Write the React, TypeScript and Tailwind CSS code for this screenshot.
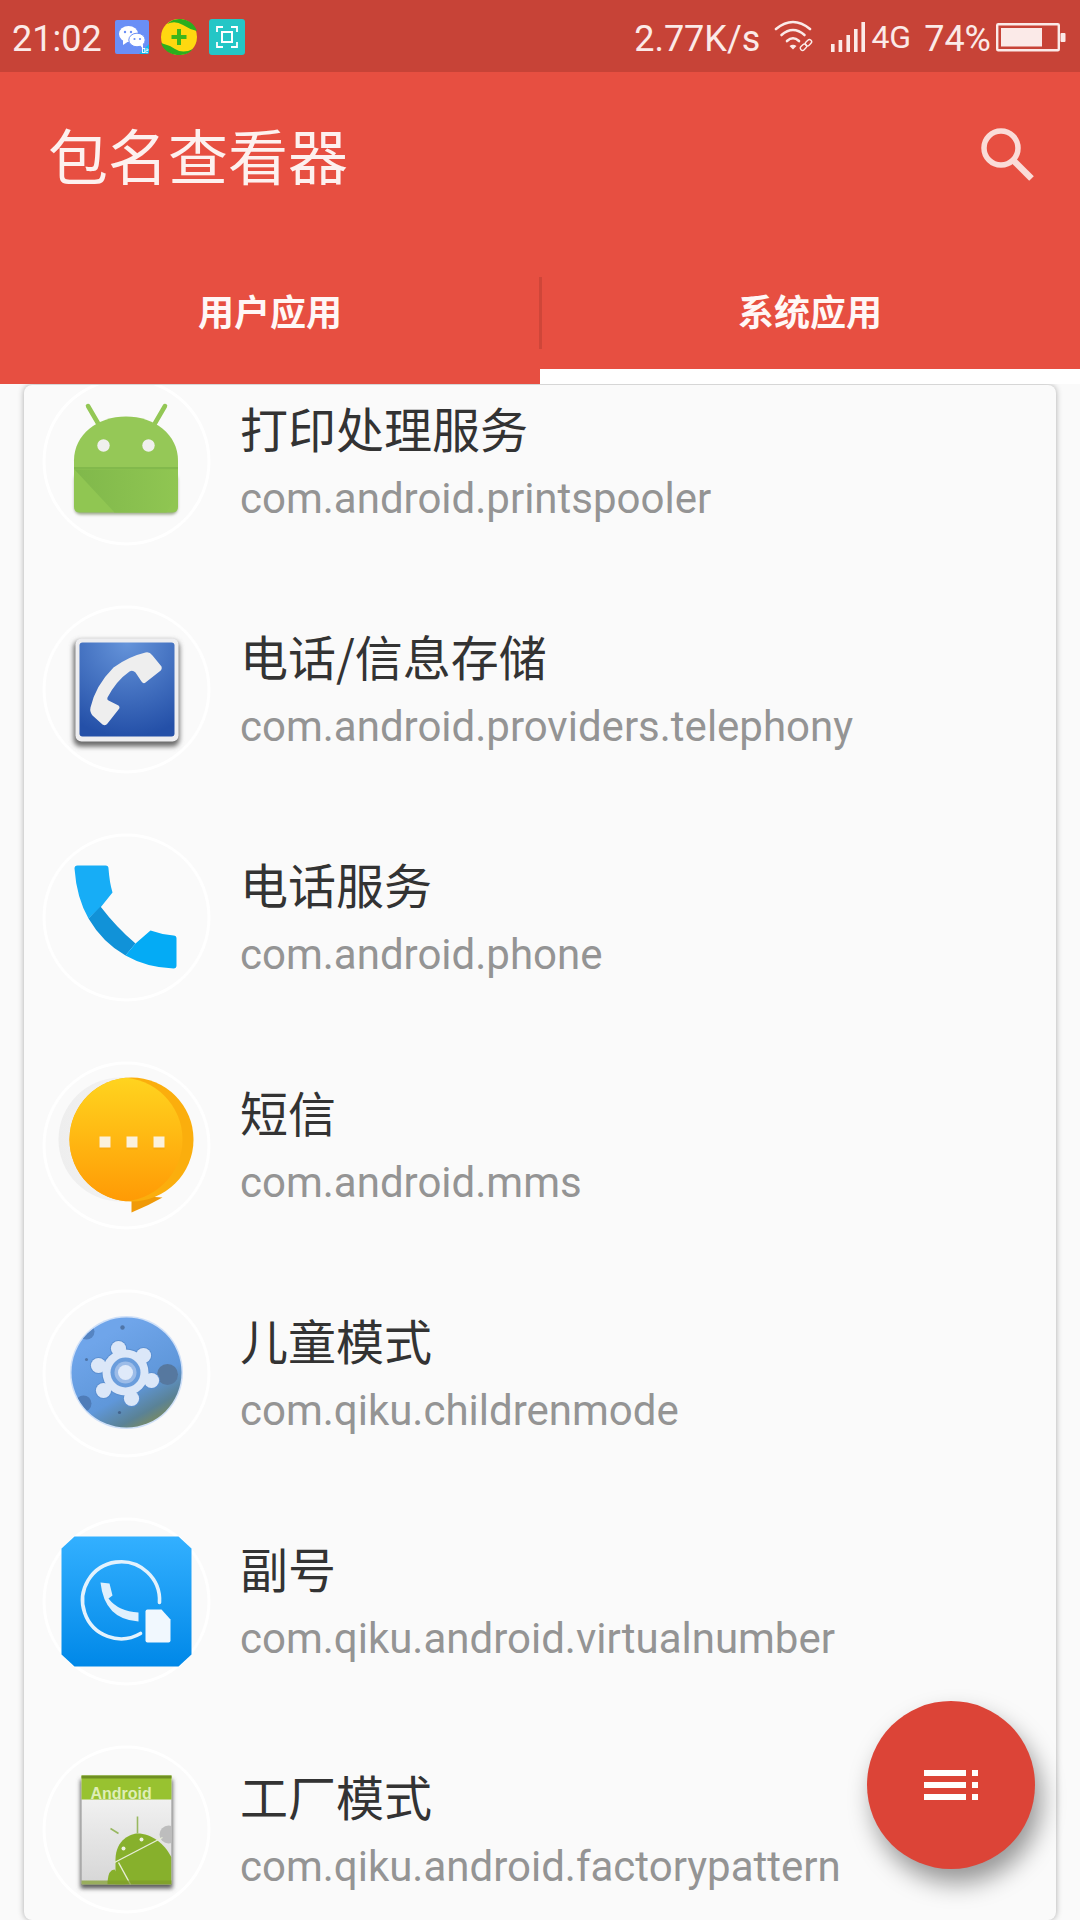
import React from "react";

const CJK = "font-['Noto_Sans_CJK_SC','Noto_Sans',sans-serif]";

function Ring() {
  return <circle cx="0" cy="0" r="82.5" fill="none" stroke="#ffffff" strokeWidth="3" />;
}

function IconFrame({ children }: { children: React.ReactNode }) {
  return (
    <svg width="167" height="167" viewBox="-83.5 -83.5 167 167" className="shrink-0 overflow-visible">
      <Ring />
      {children}
    </svg>
  );
}

function AndroidIcon() {
  return (
    <IconFrame>
      <defs>
        <filter id="aSh" x="-20%" y="-20%" width="140%" height="140%"><feGaussianBlur stdDeviation="1.5" /></filter>
        <linearGradient id="aFold" x1="0" y1="0" x2="1" y2="0">
          <stop offset="0" stopColor="#80b84b" />
          <stop offset="1" stopColor="#90c652" />
        </linearGradient>
      </defs>
      <rect x="-52" y="12" width="103" height="41" rx="6" fill="#9aa58a" filter="url(#aSh)" />
      <path d="M-38.5 -55.5 L-26 -34" stroke="#93c755" strokeWidth="4.5" strokeLinecap="round" />
      <path d="M38.5 -55.5 L26 -34" stroke="#93c755" strokeWidth="4.5" strokeLinecap="round" />
      <path d="M-52.5 6 V-1 C-52.5 -27 -29 -45 -0.5 -45 C28 -45 51.5 -27 51.5 -1 V6 Z" fill="#95c857" />
      <path d="M-52.5 6 H51.5 V45 Q51.5 51 45.5 51 H-46.5 Q-52.5 51 -52.5 45 Z" fill="#90c652" />
      <path d="M-52 8 H44 L51.5 14 V32 L40 51 H-12 Z" fill="url(#aFold)" />
      <rect x="-52.5" y="5.5" width="104" height="2.2" fill="#82b94c" />
      <circle cx="-23" cy="-16" r="6.2" fill="#f0f0ee" />
      <circle cx="22" cy="-16" r="6.2" fill="#f0f0ee" />
    </IconFrame>
  );
}

function TelephonyIcon() {
  return (
    <IconFrame>
      <defs>
        <radialGradient id="tBlue" cx="0.5" cy="0" r="1">
          <stop offset="0" stopColor="#6594da" />
          <stop offset="1" stopColor="#2450a8" />
        </radialGradient>
        <filter id="tSh" x="-20%" y="-20%" width="140%" height="140%"><feGaussianBlur stdDeviation="2.4" /></filter>
      </defs>
      <rect x="-53" y="-49" width="106" height="106" rx="7" fill="#6a6a6a" filter="url(#tSh)" />
      <rect x="-51" y="-51" width="103" height="103" rx="6" fill="#eeeef0" />
      <rect x="-47" y="-47" width="95" height="94" rx="3" fill="url(#tBlue)" />
      <path d="M19 -37 Q23 -38 26 -34 L35 -23 Q36 -20 33 -18 L19 -7 Q17 -5 15 -8 L9 -17 Q6 -20 3 -18 Q-10 -9 -19 8 Q-20 10 -18 11 L-8 16 Q-6 18 -8 20 L-19 34 Q-21 37 -24 35 L-34 26 Q-37 22 -36 18 Q-31 -4 -13 -22 Q2 -33 19 -37 Z" fill="#eeeeee" />
    </IconFrame>
  );
}

function PhoneIcon() {
  return (
    <IconFrame>
      <path d="M-52 -49 Q-52 -52 -49 -52 L-21 -52 Q-18 -52 -18 -49 Q-17 -35 -14 -25 L-26 -10 L-38 1 Q-50 -20 -52 -49 Z" fill="#17adf6" />
      <path d="M-26 -11 Q-10 10 9 26 L-1 38 Q-24 25 -38 1 Z" fill="#1192d8" />
      <path d="M9 26 L24 13 Q35 17 47 18 Q50 18 50 21 V48 Q50 51 47 51 Q20 50 -1 38 Z" fill="#04abf5" />
    </IconFrame>
  );
}

function MmsIcon() {
  return (
    <IconFrame>
      <defs>
        <linearGradient id="mGrad" x1="0" y1="0" x2="0" y2="1">
          <stop offset="0" stopColor="#ffd41f" />
          <stop offset="1" stopColor="#ff9a05" />
        </linearGradient>
        <linearGradient id="mBack" x1="0" y1="0" x2="1" y2="0">
          <stop offset="0" stopColor="#eeeeee" />
          <stop offset="1" stopColor="#f6f6f6" />
        </linearGradient>
        <clipPath id="mClip"><circle cx="5" cy="-6" r="62" /></clipPath>
      </defs>
      <circle cx="-6" cy="-6" r="62" fill="url(#mBack)" />
      <path d="M5 50 V67 Q22 60 36 52 Z" fill="#f09a08" />
      <circle cx="5" cy="-6" r="62" fill="#fbae0d" />
      <circle cx="-6" cy="-6" r="62" fill="url(#mGrad)" clipPath="url(#mClip)" />
      {[-27, 0, 27].map((x) => (
        <g key={x}>
          <rect x={x} y="-7" width="11" height="11" fill="#e88a00" opacity="0.25" />
          <rect x={x} y="-9" width="11" height="11" fill="#fbf1dd" />
        </g>
      ))}
    </IconFrame>
  );
}

function ChildIcon() {
  const teeth = [[-7, -24], [18, -17], [26, 8], [6, 26], [-22, 18], [-27, -7]];
  return (
    <IconFrame>
      <defs>
        <linearGradient id="pGrad" x1="0.25" y1="0.2" x2="0.7" y2="1">
          <stop offset="0" stopColor="#6fa5ea" />
          <stop offset="0.6" stopColor="#5f97da" />
          <stop offset="0.85" stopColor="#5a8296" />
          <stop offset="1" stopColor="#7b8b5f" />
        </linearGradient>
        <clipPath id="pClip"><circle cx="0" cy="-1" r="55" /></clipPath>
      </defs>
      <circle cx="0" cy="-1" r="56.5" fill="#cfe0f8" />
      <circle cx="0" cy="-1" r="55" fill="url(#pGrad)" />
      <g clipPath="url(#pClip)">
        <circle cx="41" cy="1" r="10.5" fill="#56789f" />
        <circle cx="-43" cy="30" r="8" fill="#4f7cb8" />
        <circle cx="-40" cy="-42" r="8" fill="#5584c2" />
        <circle cx="-4" cy="-46" r="2.2" fill="#4f75a8" />
        <circle cx="-40" cy="-14" r="1.5" fill="#4f75a8" />
        <circle cx="-7" cy="39" r="1.6" fill="#44648c" />
      </g>
      <g transform="translate(-1 -1)">
        {teeth.map(([x, y]) => (
          <circle key={`o${x}${y}`} cx={x} cy={y} r="8.6" fill="#5b8fd0" />
        ))}
        <circle cx="0" cy="0" r="24" fill="#5b8fd0" />
        {teeth.map(([x, y]) => (
          <circle key={`f${x}${y}`} cx={x} cy={y} r="7.6" fill="#dbe7f8" />
        ))}
        <circle cx="0" cy="0" r="23" fill="#dbe7f8" />
        <circle cx="0" cy="0" r="15" fill="#6a9ddc" />
        <circle cx="0" cy="0" r="11" fill="#9cbce8" />
        <circle cx="0" cy="0" r="7.5" fill="#dfeafa" />
      </g>
    </IconFrame>
  );
}

function VirtualIcon() {
  return (
    <IconFrame>
      <defs>
        <linearGradient id="vGrad" x1="0" y1="0" x2="0" y2="1">
          <stop offset="0" stopColor="#33b0ff" />
          <stop offset="1" stopColor="#0088e8" />
        </linearGradient>
      </defs>
      <path d="M-52 -65 H52 L65 -53 V53 L52 65 H-52 L-65 53 V-53 Z" fill="url(#vGrad)" />
      <path d="M33 1 A38.5 38.5 0 1 0 14 32" fill="none" stroke="#e3f2fd" strokeWidth="3.6" strokeLinecap="round" />
      <path d="M-26 -19 L-17 -18 L-14 -6 L-18 -3 Q-8 10 12 11 V20 Q-22 18 -26 -19 Z" fill="#dff0fd" />
      <path d="M21 8 H35 L44 18 V39 Q44 41 42 41 H21 Q19 41 19 39 V10 Q19 8 21 8 Z" fill="#f1f8fe" />
    </IconFrame>
  );
}

function FactoryIcon() {
  return (
    <IconFrame>
      <defs>
        <linearGradient id="fGrad" x1="0" y1="0" x2="0" y2="1">
          <stop offset="0" stopColor="#f8f8f8" />
          <stop offset="1" stopColor="#d6d6d6" />
        </linearGradient>
        <filter id="fSh" x="-20%" y="-20%" width="140%" height="140%"><feGaussianBlur stdDeviation="2" /></filter>
        <clipPath id="fClip"><rect x="-45" y="-54" width="90" height="109" /></clipPath>
      </defs>
      <rect x="-46" y="-50" width="92" height="109" fill="#5a5a5a" filter="url(#fSh)" />
      <rect x="-45" y="-54" width="90" height="109" rx="1" fill="url(#fGrad)" />
      <rect x="-45" y="-54" width="90" height="24" fill="#98c230" />
      <rect x="-45" y="-54" width="90" height="3" fill="#6f8f22" />
      <text x="-36" y="-31" fontSize="16" fontWeight="700" fill="#dfeeb8" fontFamily="Liberation Sans, sans-serif">Android</text>
      <g clipPath="url(#fClip)">
        <circle cx="42" cy="5" r="9" fill="#bdbdbd" />
        <path d="M-11 47 V30 C-11 10 5 4 11 4 C25 4 38 14 45 28 V55 H-11 Z" fill="#87b02c" />
        <path d="M-12 33 L36 8" stroke="#e8eed8" strokeWidth="1.4" />
        <path d="M-8 33 L4 55" stroke="#e8eed8" strokeWidth="1.4" />
        <path d="M-16 -1 L-8 4 M11 -13 V4" stroke="#98b860" strokeWidth="1.6" />
        <path d="M-19 52 Q-18 40 -12 40 L-1 55 H-19 Z" fill="#87b02c" />
        <circle cx="-3" cy="19" r="2" fill="#eef2e0" />
        <circle cx="15" cy="10" r="2" fill="#eef2e0" />
      </g>
      <rect x="-45" y="51" width="90" height="4" fill="#7f9d2a" opacity="0.7" />
    </IconFrame>
  );
}

const apps: { name: string; pkg: string; Icon: () => React.ReactElement }[] = [
  { name: "打印处理服务", pkg: "com.android.printspooler", Icon: AndroidIcon },
  { name: "电话/信息存储", pkg: "com.android.providers.telephony", Icon: TelephonyIcon },
  { name: "电话服务", pkg: "com.android.phone", Icon: PhoneIcon },
  { name: "短信", pkg: "com.android.mms", Icon: MmsIcon },
  { name: "儿童模式", pkg: "com.qiku.childrenmode", Icon: ChildIcon },
  { name: "副号", pkg: "com.qiku.android.virtualnumber", Icon: VirtualIcon },
  { name: "工厂模式", pkg: "com.qiku.android.factorypattern", Icon: FactoryIcon },
];

function WechatNote() {
  return (
    <svg width="34" height="34" viewBox="0 0 34 34">
      <rect width="34" height="34" rx="2" fill="#6a8ff6" />
      <ellipse cx="13.5" cy="14" rx="9.5" ry="8" fill="#fff" />
      <path d="M8 19 L8 25 L14 21 Z" fill="#fff" />
      <ellipse cx="22" cy="20" rx="8.2" ry="6.8" fill="#fff" stroke="#6a8ff6" strokeWidth="1" />
      <path d="M25 25 L28 29 L28 24 Z" fill="#fff" />
      <circle cx="10" cy="12" r="1.2" fill="#6a8ff6" />
      <circle cx="16" cy="12" r="1.2" fill="#6a8ff6" />
      <circle cx="19.5" cy="19" r="1.1" fill="#6a8ff6" />
      <circle cx="25" cy="19" r="1.1" fill="#6a8ff6" />
      <path d="M24 34 L34 24 V32 Q34 34 32 34 Z" fill="#10b9ee" />
      <rect x="27.5" y="28.5" width="2.3" height="4" fill="none" stroke="#fff" strokeWidth="0.9" />
      <path d="M30.8 29 H33 V30.6 H30.8 V32.6 H33" fill="none" stroke="#fff" strokeWidth="0.8" />
    </svg>
  );
}

function GuardNote() {
  return (
    <svg width="36" height="36" viewBox="0 0 36 36">
      <circle cx="18" cy="18" r="18" fill="#ffd810" />
      <path d="M18 0 A18 18 0 0 1 36 12 Q28 10 22 6 Q14 1 6 5 A18 18 0 0 1 18 0 Z" fill="#2cae1e" />
      <path d="M0 24 Q8 26 14 30 Q22 35 32 30 A18 18 0 0 1 18 36 A18 18 0 0 1 0 24 Z" fill="#2cae1e" />
      <path d="M18 10 V26 M10.5 18 H25.5" stroke="#3db51b" strokeWidth="4" />
    </svg>
  );
}

function ScreenNote() {
  return (
    <svg width="36" height="36" viewBox="0 0 36 36">
      <rect width="36" height="36" rx="3" fill="#24c6c6" />
      <path d="M8 13 V8 H14 M22 8 H28 V13 M28 23 V28 H22 M14 28 H8 V23" fill="none" stroke="#fff" strokeWidth="1.8" />
      <rect x="13" y="13" width="10" height="10" fill="none" stroke="#fff" strokeWidth="2" />
    </svg>
  );
}

function Wifi() {
  return (
    <svg width="40" height="32" viewBox="0 0 40 32">
      <g fill="none" stroke="#fbeae8" strokeWidth="2.6" strokeLinecap="round">
        <path d="M2 9 Q19 -5 36 9" />
        <path d="M7.5 15 Q19 5 30.5 15" />
        <path d="M13 21 Q19 15.5 25 21" />
      </g>
      <path d="M15.5 26 Q19 23.5 22.5 26 L19 29.5 Z" fill="#fbeae8" />
      <g fill="none" stroke="#fbeae8" strokeWidth="1.4">
        <rect x="26" y="25" width="7" height="4.4" rx="2.2" transform="rotate(-45 29.5 27.2)" />
        <rect x="31" y="20.5" width="7" height="4.4" rx="2.2" transform="rotate(-45 34.5 22.7)" />
      </g>
    </svg>
  );
}

function Signal() {
  return (
    <svg width="34" height="30" viewBox="0 0 34 30" fill="#fbeae8">
      <rect x="0" y="22" width="3.6" height="8" />
      <rect x="7.6" y="18" width="3.6" height="12" />
      <rect x="15.4" y="13" width="3.6" height="17" />
      <rect x="23" y="7" width="3.6" height="23" />
      <rect x="30.4" y="0" width="3.6" height="30" />
    </svg>
  );
}

function Battery() {
  return (
    <svg width="71" height="29" viewBox="0 0 71 29">
      <rect x="1.2" y="1.2" width="61.6" height="26" rx="1" fill="none" stroke="#fbeae8" strokeWidth="2.4" />
      <rect x="5" y="5" width="41" height="18.5" fill="#fbeae8" />
      <rect x="64.5" y="10" width="5" height="9" rx="1" fill="#fbeae8" />
    </svg>
  );
}

function SearchIcon() {
  return (
    <svg width="56" height="56" viewBox="0 0 56 56" fill="none" stroke="#fadcd8" strokeWidth="5.5">
      <circle cx="21" cy="20" r="17" />
      <path d="M33 32 L51.5 50.5" strokeWidth="6.5" />
    </svg>
  );
}

export default function App() {
  return (
    <div className="relative flex h-[1920px] w-[1080px] flex-col overflow-hidden bg-[#fafafa] font-['Roboto','Noto_Sans_CJK_SC',sans-serif]">
      <div className="flex h-[72px] shrink-0 items-center bg-[#c74337] text-[36px] text-[#fbeae8]">
        <span className="ml-[12px] mr-[13px] mt-[6px] leading-none">21:02</span>
        <div className="mt-[1px] flex items-center gap-[12px]">
          <WechatNote />
          <GuardNote />
          <ScreenNote />
        </div>
        <span className="ml-auto mr-[14px] mt-[6px] leading-none">2.77K/s</span>
        <Wifi />
        <div className="ml-[17px] mt-[2px]"><Signal /></div>
        <span className="ml-[6px] mt-[1px] text-[32px] leading-none">4G</span>
        <span className="ml-[13px] mr-[5px] mt-[6px] leading-none">74%</span>
        <div className="mr-[13px] mt-[3px]"><Battery /></div>
      </div>

      <div className="z-10 shrink-0 bg-[#e74f41]">
        <div className="flex h-[168px] items-center justify-between pl-[48px] pr-[44px]">
          <h1 className={`${CJK} -mt-[4px] text-[60px] font-normal leading-none text-[#fdf1ef]`}>包名查看器</h1>
          <SearchIcon />
        </div>
        <div className="relative flex h-[144px]">
          <div className="flex w-[540px] items-center justify-center pb-[4px]">
            <span className={`${CJK} text-[36px] font-bold text-[#fff7f6]`}>用户应用</span>
          </div>
          <div className="absolute left-[539px] top-[37px] h-[72px] w-[3px] bg-[#cf4639]" />
          <div className="flex w-[540px] items-center justify-center border-b-[15px] border-white pt-[11px]">
            <span className={`${CJK} text-[36px] font-bold text-[#fff7f6]`}>系统应用</span>
          </div>
        </div>
      </div>

      <div className="mx-[24px] mt-[1px] flex-1 overflow-hidden rounded-[8px] bg-[#fafafa] shadow-[0_0_6px_rgba(0,0,0,0.32)]">
        <div className="-mt-[38px] flex flex-col">
          {apps.map(({ name, pkg, Icon }) => (
            <div key={pkg} className="flex h-[228px] shrink-0 items-center pl-[19px]">
              <Icon />
              <div className="ml-[30px] flex flex-col">
                <span className={`${CJK} h-[76px] text-[48px] leading-[68px] text-[#333333]`}>{name}</span>
                <span className="text-[42px] leading-[60px] text-[#949494]">{pkg}</span>
              </div>
            </div>
          ))}
        </div>
      </div>

      <button className="absolute left-[867px] top-[1701px] flex h-[168px] w-[168px] items-center justify-center rounded-full bg-[#dc4437] shadow-[6px_14px_24px_rgba(0,0,0,0.4)]">
        <svg width="54" height="30" viewBox="0 0 54 30" fill="#ffffff">
          <rect x="0" y="0" width="42" height="6" />
          <rect x="48" y="0" width="6" height="6" />
          <rect x="0" y="12" width="42" height="6" />
          <rect x="48" y="12" width="6" height="6" />
          <rect x="0" y="24" width="42" height="6" />
          <rect x="48" y="24" width="6" height="6" />
        </svg>
      </button>
    </div>
  );
}
